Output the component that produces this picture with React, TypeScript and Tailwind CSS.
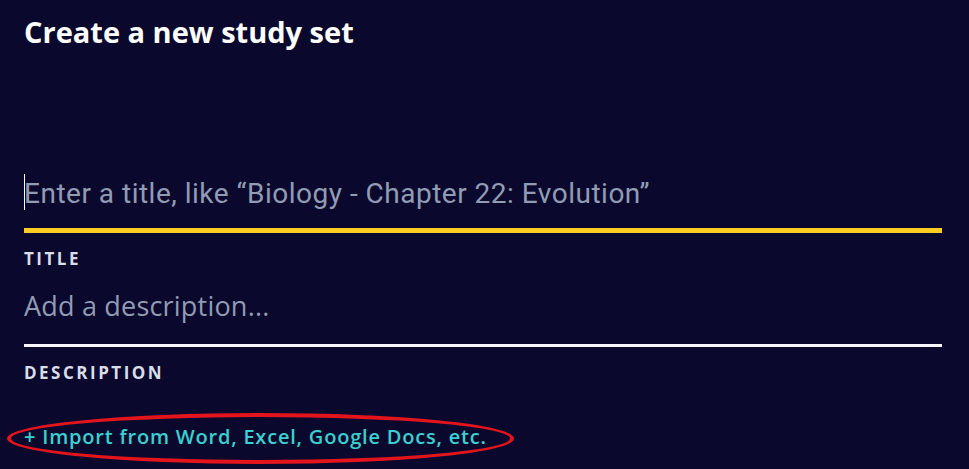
const Field = ({
  placeholder,
  label,
  active,
}: {
  placeholder: string;
  label: string;
  active?: boolean;
}) => {
  return (
    <div className="flex flex-col">
      <div className="relative flex items-center h-[48px]">
        {/* caret */}
        {active && <span className="absolute left-0 top-[4px] w-[1px] h-[36px] bg-white" />}
        <input
          readOnly
          placeholder={placeholder}
          className={
            active
              ? "w-full bg-transparent outline-none text-[28px] tracking-[0.5px] placeholder:text-[#939bb4] font-['Roboto',sans-serif]"
              : "w-full bg-transparent outline-none text-[27px] tracking-[0.2px] placeholder:text-[#939bb4] font-['Open_Sans',sans-serif]"
          }
        />
      </div>
      <div className={active ? "h-[5px] bg-[#ffcd1f] mt-[10px]" : "h-[3px] bg-[#f6f7fb] mt-[14px]"} />
      <span className="mt-[15px] text-[17px] leading-[22px] font-bold tracking-[2.5px] text-[#d9dde8] font-['Open_Sans',sans-serif]">
        {label}
      </span>
    </div>
  );
};

export default function App() {
  return (
    <div className="w-[969px] h-[469px] bg-[#0a092d] pl-6 pr-[27px] pt-[14px] overflow-hidden font-['Open_Sans',sans-serif]">
      <h1 className="text-[29px] font-bold text-white leading-[36px]">Create a new study set</h1>

      <div className="mt-[120px] flex flex-col gap-[12px]">
        <Field placeholder="Enter a title, like “Biology - Chapter 22: Evolution”" label="TITLE" active />
        <Field placeholder="Add a description..." label="DESCRIPTION" />
      </div>

      <div className="relative mt-[39px] w-fit">
        {/* highlight ring drawn over the link */}
        <span className="absolute -left-[17px] -right-[27px] -top-[10px] -bottom-[13px] rounded-[50%] border-4 border-[#e3141b]" />
        <a className="block text-[20px] leading-[28px] font-semibold tracking-[0.8px] text-[#3ccfcf]">+ Import from Word, Excel, Google Docs, etc.</a>
      </div>
    </div>
  );
}
